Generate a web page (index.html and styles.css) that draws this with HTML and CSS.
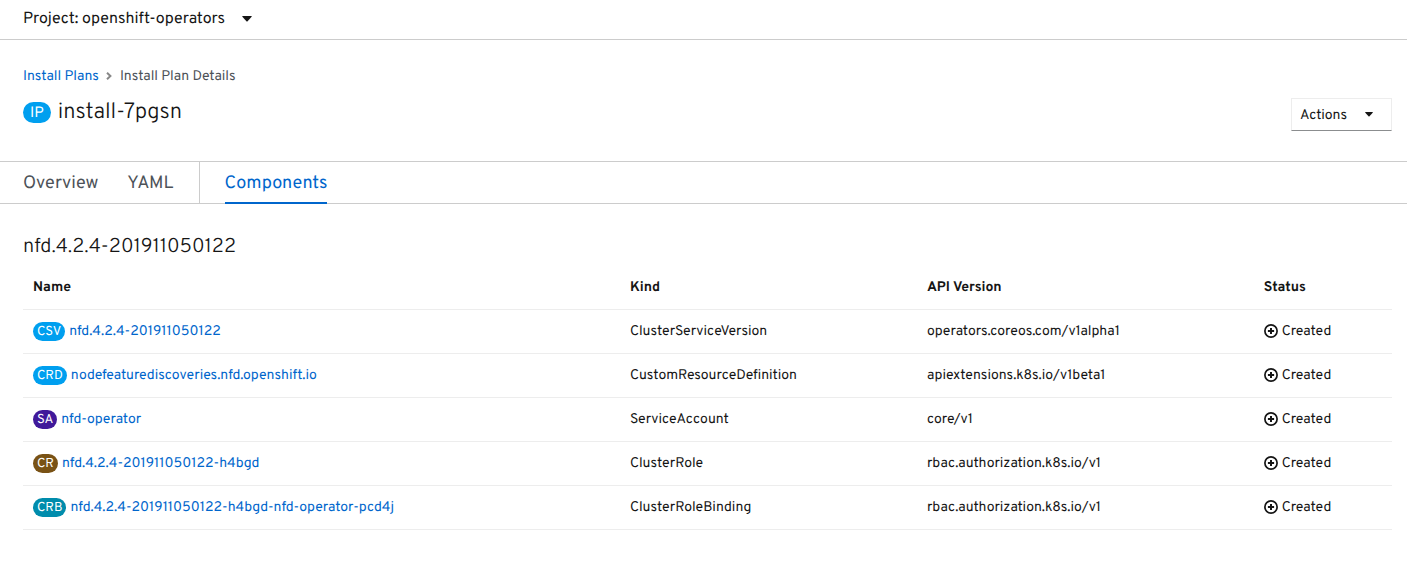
FILE: index.html
```html
<!DOCTYPE html>
<html lang="en">
<head>
<meta charset="utf-8">
<title>install-7pgsn · Install Plan Details</title>
<link rel="stylesheet" href="styles.css">
</head>
<body>
<svg class="defs" aria-hidden="true">
  <symbol id="caret" viewBox="0 0 10 6"><path d="M0.8 0h8.4q1 0 .4.8L5.6 5.2q-.6.6-1.2 0L.4.8Q-.2 0 .8 0z"/></symbol>
  <symbol id="created" viewBox="0 0 14 14"><circle cx="7" cy="7" r="6.1" fill="none" stroke="currentColor" stroke-width="1.7"/><path d="M7 3.9v6.2M3.9 7h6.2" fill="none" stroke="currentColor" stroke-width="2"/></symbol>
</svg>
<header class="project-bar">
  <button class="project-button" type="button"><span>Project: openshift-operators</span><svg class="caret"><use href="#caret"/></svg></button>
</header>
<main>
  <nav class="breadcrumb" aria-label="Breadcrumb">
    <a href="#plans">Install Plans</a>
    <svg class="chevron" viewBox="0 0 6 8"><path d="M1 .8 4.4 4 1 7.2"/></svg>
    <span>Install Plan Details</span>
  </nav>
  <div class="heading">
    <h1><span class="badge badge-large">IP</span><span class="title">install-7pgsn</span></h1>
    <button class="actions" type="button"><span>Actions</span><svg class="caret caret-small"><use href="#caret"/></svg></button>
  </div>
  <nav class="tabs" aria-label="Details">
    <a class="tab" href="#overview">Overview</a>
    <a class="tab" href="#yaml">YAML</a>
    <div class="tab-group"><a class="tab tab-active" href="#components" aria-current="page">Components</a></div>
  </nav>
  <section class="components">
    <h2>nfd.4.2.4-201911050122</h2>
    <table>
      <colgroup><col class="col-name"><col class="col-kind"><col class="col-api"><col></colgroup>
      <thead><tr><th>Name</th><th>Kind</th><th>API Version</th><th>Status</th></tr></thead>
      <tbody>
        <tr><td><div class="resource"><span class="badge">CSV</span><a href="#csv">nfd.4.2.4-201911050122</a></div></td><td class="text">ClusterServiceVersion</td><td class="text">operators.coreos.com/v1alpha1</td><td><div class="status"><svg><use href="#created"/></svg><span>Created</span></div></td></tr>
        <tr><td><div class="resource"><span class="badge">CRD</span><a href="#crd">nodefeaturediscoveries.nfd.openshift.io</a></div></td><td class="text">CustomResourceDefinition</td><td class="text">apiextensions.k8s.io/v1beta1</td><td><div class="status"><svg><use href="#created"/></svg><span>Created</span></div></td></tr>
        <tr><td><div class="resource"><span class="badge badge-account">SA</span><a href="#sa">nfd-operator</a></div></td><td class="text">ServiceAccount</td><td class="text">core/v1</td><td><div class="status"><svg><use href="#created"/></svg><span>Created</span></div></td></tr>
        <tr><td><div class="resource"><span class="badge badge-role">CR</span><a href="#cr">nfd.4.2.4-201911050122-h4bgd</a></div></td><td class="text">ClusterRole</td><td class="text">rbac.authorization.k8s.io/v1</td><td><div class="status"><svg><use href="#created"/></svg><span>Created</span></div></td></tr>
        <tr><td><div class="resource"><span class="badge badge-binding">CRB</span><a href="#crb">nfd.4.2.4-201911050122-h4bgd-nfd-operator-pcd4j</a></div></td><td class="text">ClusterRoleBinding</td><td class="text">rbac.authorization.k8s.io/v1</td><td><div class="status"><svg><use href="#created"/></svg><span>Created</span></div></td></tr>
      </tbody>
    </table>
  </section>
</main>
</body>
</html>
```
FILE: styles.css
```css
* { box-sizing: border-box; }
body {
  margin: 0;
  background: #fff;
  color: #151515;
  font-family: Overpass, Roboto, sans-serif;
  font-size: 14px;
  line-height: 20px;
  text-rendering: geometricPrecision;
}
a { color: #06c; text-decoration: none; }
button { font: inherit; color: inherit; background: none; border: 0; cursor: pointer; text-rendering: inherit; }
.defs { position: absolute; width: 0; height: 0; }
.caret { width: 10px; height: 6px; fill: #151515; }
.caret-small { width: 8px; height: 5px; }
.project-bar {
  display: flex;
  height: 40px;
  padding: 0 23px 2px;
  border-bottom: 1px solid #ccc;
}
.project-button { display: flex; align-items: center; gap: 17px; padding: 0; font-size: 16px; }
.project-button span { padding-top: 2px; }
.breadcrumb { display: flex; align-items: center; padding: 28px 23px 0; color: #4d5258; }
.chevron { width: 6px; height: 8px; margin: 0 8px 4px 7px; fill: none; stroke: #888; stroke-width: 2; }
.heading {
  display: flex;
  justify-content: space-between;
  align-items: flex-start;
  padding: 10px 15px 30px 23px;
}
h1, h2 { margin: 0; font-weight: 300; }
h1 { display: flex; align-items: center; gap: 7px; font-size: 22px; line-height: 28px; }
.title { padding-top: 2px; margin-bottom: -2px; }
.badge {
  padding: 2px 4px 0;
  border-radius: 20px;
  background: #009fef;
  color: #fff;
  font-size: 13px;
  line-height: 17px;
}
.badge-large { padding: 2px 7px 0; font-size: 15px; font-weight: 400; line-height: 19px; }
.badge-account { background: #40199a; }
.badge-role { background: #795215; }
.badge-binding { background: #008cac; }
.actions {
  display: flex;
  align-items: center;
  justify-content: space-between;
  width: 101px;
  height: 33px;
  padding: 0 18px 0 8px;
  border: 1px solid #ededed;
  border-bottom-color: #8b8d8f;
}
.actions span { padding-top: 4px; }
.tabs {
  display: flex;
  gap: 29px;
  padding: 0 23px;
  border-top: 1px solid #ccc;
  border-bottom: 1px solid #ccc;
  font-size: 18px;
}
.tab { margin-bottom: -1px; padding: 12px 0 8px; border-bottom: 2px solid transparent; color: #4d5258; }
.tab-group { display: flex; margin-left: -4px; padding-left: 25px; border-left: 1px solid #ccc; }
.tab-active { border-color: #06c; color: #06c; }
.components { padding: 31px 15px 40px 23px; }
h2 { font-size: 20px; line-height: 24px; }
table { width: 100%; margin-top: 6px; border-collapse: collapse; table-layout: fixed; }
.col-name { width: 43.6%; }
.col-kind { width: 21.7%; }
.col-api { width: 24.6%; }
th, td { height: 44px; padding: 0 10px; border-bottom: 1px solid #ededed; text-align: left; }
th { padding-top: 5px; font-weight: 700; }
.text { padding-top: 4px; }
.resource, .status { display: flex; align-items: center; gap: 4px; }
.resource a, .status span { padding-top: 4px; }
.status svg { width: 14px; height: 14px; }
```
